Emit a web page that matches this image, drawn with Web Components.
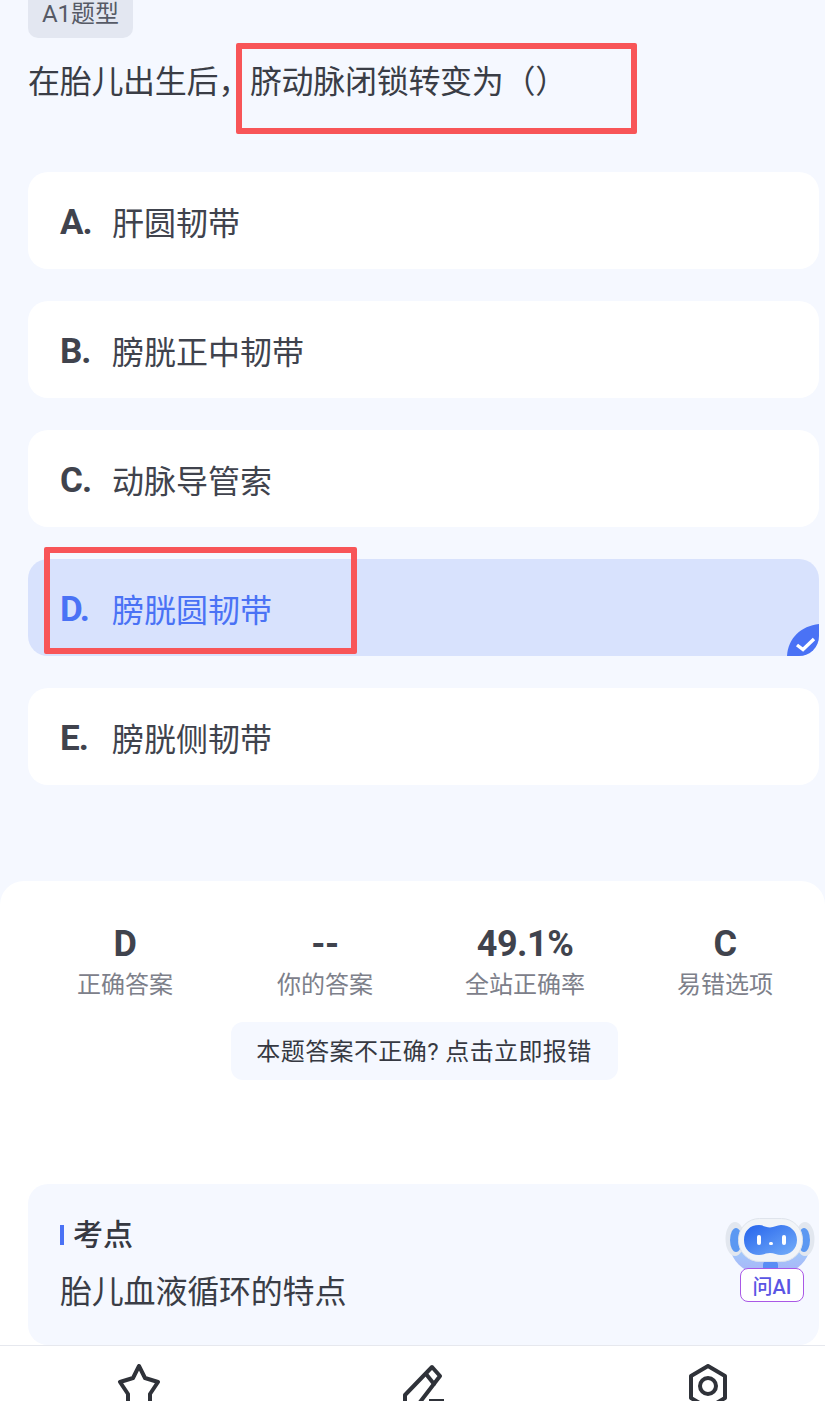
<!DOCTYPE html>
<html lang="zh">
<head>
<meta charset="utf-8">
<title>A1题型</title>
<style>
  html, body { margin: 0; padding: 0; }
  body {
    width: 825px;
    height: 1401px;
    overflow: hidden;
    position: relative;
    background: #f5f8ff;
    color: #363942;
    font-family: Roboto, "Noto Sans CJK SC", "Noto Sans", sans-serif;
  }
  .options { display: flex; flex-direction: column; gap: 32px; margin: 66px 6px 0 28px; }
</style>
</head>
<body>
  <q-tag>A1题型</q-tag>
  <q-stem>在胎儿出生后，脐动脉闭锁转变为（）</q-stem>
  <div class="options">
    <q-option letter="A.">肝圆韧带</q-option>
    <q-option letter="B.">膀胱正中韧带</q-option>
    <q-option letter="C.">动脉导管索</q-option>
    <q-option letter="D." selected>膀胱圆韧带</q-option>
    <q-option letter="E.">膀胱侧韧带</q-option>
  </div>
  <answer-sheet>
    <stat-item value="D">正确答案</stat-item>
    <stat-item value="--">你的答案</stat-item>
    <stat-item value="49.1%">全站正确率</stat-item>
    <stat-item value="C">易错选项</stat-item>
    <report-button slot="report">本题答案不正确? 点击立即报错</report-button>
    <point-card slot="point" title="考点">胎儿血液循环的特点</point-card>
  </answer-sheet>
  <bottom-bar></bottom-bar>
  <robot-badge></robot-badge>
  <red-mark style="left:236px;top:43px;width:401px;height:91px"></red-mark>
  <red-mark style="left:44px;top:547px;width:313px;height:107px"></red-mark>

<script>
class QTag extends HTMLElement {
  constructor () {
    super()
    this.attachShadow({ mode: 'open' }).innerHTML = `
      <style>
        :host {
          display: block;
          box-sizing: border-box;
          width: 105px;
          height: 50px;
          margin: -12px 0 0 28px;
          padding-top: 9px;
          text-align: center;
          font-size: 24px;
          line-height: 34px;
          color: #565a66;
          background: #e3e7f1;
          border-radius: 10px;
        }
      </style>
      <slot></slot>`
  }
}

class QStem extends HTMLElement {
  constructor () {
    super()
    this.attachShadow({ mode: 'open' }).innerHTML = `
      <style>
        :host {
          display: block;
          margin: 20px 0 0 28px;
          font-size: 32px;
          line-height: 48px;
          letter-spacing: -0.3px;
          color: #3a3d46;
          white-space: nowrap;
        }
      </style>
      <slot></slot>`
  }
}

class QOption extends HTMLElement {
  constructor () {
    super()
    const selected = this.hasAttribute('selected')
    this.attachShadow({ mode: 'open' }).innerHTML = `
      <style>
        :host {
          display: flex;
          align-items: center;
          height: 97px;
          padding-left: 32px;
          box-sizing: border-box;
          position: relative;
          overflow: hidden;
          border-radius: 20px;
          font-size: 32px;
          color: ${selected ? '#4a72f5' : '#40434d'};
          background: ${selected ? '#d8e2fd' : '#fff'};
        }
        .letter { width: 52px; margin-top: 4px; font-size: 35px; font-weight: 700; letter-spacing: -1px; flex: none; }
        svg { position: absolute; right: 0; bottom: 0; }
      </style>
      <span class="letter">${this.getAttribute('letter')}</span>
      <slot></slot>
      ${selected ? `<svg width="32" height="32" viewBox="0 0 32 32">
        <path d="M0 32C1 14 14 2 32 0V32Z" fill="#4a72f5"/>
        <path d="M10 21l6 4.5L27 15" fill="none" stroke="#fff" stroke-width="3.4"/>
      </svg>` : ''}`
  }
}

class AnswerSheet extends HTMLElement {
  constructor () {
    super()
    this.attachShadow({ mode: 'open' }).innerHTML = `
      <style>
        :host {
          display: block;
          box-sizing: border-box;
          height: 464px;
          margin-top: 96px;
          padding: 43px 0 0 25px;
          background: #fff;
          border-radius: 24px 24px 0 0;
        }
        .stats { display: grid; grid-template-columns: repeat(4, 200px); }
        .report { display: flex; justify-content: center; margin: 19px 2px 0 0; }
        .point { margin: 104px 6px 0 3px; }
      </style>
      <div class="stats"><slot></slot></div>
      <div class="report"><slot name="report"></slot></div>
      <div class="point"><slot name="point"></slot></div>`
  }
}

class StatItem extends HTMLElement {
  constructor () {
    super()
    this.attachShadow({ mode: 'open' }).innerHTML = `
      <style>
        :host { display: flex; flex-direction: column; align-items: center; gap: 3px; }
        .value { font-size: 36px; line-height: 40px; font-weight: 700; letter-spacing: -0.5px; color: #40434d; }
        .label { font-size: 24px; line-height: 36px; color: #7d808a; white-space: nowrap; }
      </style>
      <span class="value">${this.getAttribute('value')}</span>
      <span class="label"><slot></slot></span>`
  }
}

class ReportButton extends HTMLElement {
  constructor () {
    super()
    this.attachShadow({ mode: 'open' }).innerHTML = `
      <style>
        :host {
          display: flex;
          align-items: center;
          justify-content: center;
          box-sizing: border-box;
          width: 387px;
          height: 58px;
          padding-bottom: 4px;
          font-size: 24px;
          letter-spacing: 0.4px;
          color: #363942;
          background: #f5f8ff;
          border-radius: 12px;
          white-space: nowrap;
        }
      </style>
      <slot></slot>`
  }
}

class PointCard extends HTMLElement {
  constructor () {
    super()
    this.attachShadow({ mode: 'open' }).innerHTML = `
      <style>
        :host {
          display: block;
          box-sizing: border-box;
          height: 161px;
          padding: 29px 0 0 32px;
          background: #f5f8ff;
          border-radius: 20px;
        }
        .title {
          display: flex;
          align-items: center;
          gap: 9px;
          font-size: 30px;
          line-height: 44px;
          font-weight: 500;
          color: #363942;
        }
        .title i { width: 4px; height: 20px; background: #4a72f5; }
        .body { margin-top: 12px; font-size: 32px; line-height: 46px; letter-spacing: -0.2px; color: #3a3d46; }
      </style>
      <div class="title"><i></i>${this.getAttribute('title')}</div>
      <div class="body"><slot></slot></div>`
  }
}

class BottomBar extends HTMLElement {
  constructor () {
    super()
    this.attachShadow({ mode: 'open' }).innerHTML = `
      <style>
        :host {
          display: flex;
          justify-content: space-between;
          box-sizing: border-box;
          position: absolute;
          left: 0;
          right: 0;
          top: 1345px;
          height: 56px;
          overflow: hidden;
          padding: 18px 96px 0 117px;
          background: #fff;
          border-top: 1px solid #e6e8ee;
        }
        svg { fill: none; stroke: #2f3239; stroke-width: 4; stroke-linejoin: round; stroke-linecap: round; flex: none; }
      </style>
      <svg width="44" height="46" viewBox="0 0 44 46">
        <path d="M22 2l6 12 13 4-8 12 0 15-11-6-11 6 0-15-8-12 13-4z"/>
      </svg>
      <svg width="44" height="46" viewBox="0 0 44 46">
        <path d="M30 3l8 9-23 30H3V31z"/>
        <path d="M24 10l8 10"/>
        <path d="M27 37h15" stroke-linecap="butt"/>
      </svg>
      <svg width="42" height="46" viewBox="0 0 42 46">
        <path d="M21 2l17 10v22L21 44 4 34V12z"/>
        <circle cx="21" cy="22" r="8"/>
      </svg>`
  }
}

class RobotBadge extends HTMLElement {
  constructor () {
    super()
    this.attachShadow({ mode: 'open' }).innerHTML = `
      <style>
        :host { position: absolute; left: 725px; top: 1215px; width: 90px; height: 90px; display: block; }
        svg { display: block; }
        .tag {
          position: absolute;
          left: 15px;
          top: 53px;
          box-sizing: border-box;
          width: 64px;
          height: 34px;
          display: flex;
          align-items: center;
          justify-content: center;
          background: #fff;
          border: 1.5px solid #a958e6;
          border-radius: 8px;
          font-size: 20px;
          font-weight: 500;
          color: #5a55e4;
          white-space: nowrap;
        }
      </style>
      <svg width="90" height="70" viewBox="0 0 90 70">
        <defs>
          <linearGradient id="face" x1="0" y1="0" x2="1" y2="1">
            <stop offset="0" stop-color="#2563ec"/>
            <stop offset="1" stop-color="#74aef9"/>
          </linearGradient>
          <linearGradient id="body" x1="0" y1="0" x2="0" y2="1">
            <stop offset="0" stop-color="#9fd3fb"/>
            <stop offset="1" stop-color="#a9b4f8"/>
          </linearGradient>
        </defs>
        <path d="M4 26C5 44 15 54 28 58H62C75 54 85 44 86 26Z" fill="url(#body)"/>
        <rect x="38" y="46" width="15" height="12" rx="4" fill="#5a8df5"/>
        <ellipse cx="10" cy="24" rx="9.5" ry="17" fill="#e2e7ef"/>
        <ellipse cx="80" cy="24" rx="9.5" ry="17" fill="#e2e7ef"/>
        <ellipse cx="11" cy="25" rx="6" ry="12" fill="#5b98f2"/>
        <ellipse cx="79" cy="25" rx="6" ry="12" fill="#5b98f2"/>
        <rect x="13.5" y="3.5" width="64" height="43" rx="21" fill="#f1f4f8" stroke="#dfe4ec"/>
        <path d="M34 10C38 10 41 12.500 45 12.500S52 10 56 10C65 10 72 16 72 25S65 40 56 40C52 40 49 38 45 38S38 40 34 40C25 40 19 34 19 25S25 10 34 10Z" fill="url(#face)"/>
        <rect x="32" y="20" width="4" height="10" rx="2" fill="#fff"/>
        <rect x="57" y="20" width="4" height="10" rx="2" fill="#fff"/>
        <rect x="44" y="27" width="4" height="3" rx="1.5" fill="#fff"/>
      </svg>
      <div class="tag">问AI</div>`
  }
}

class RedMark extends HTMLElement {
  constructor () {
    super()
    this.attachShadow({ mode: 'open' }).innerHTML = `
      <style>
        :host {
          display: block;
          position: absolute;
          box-sizing: border-box;
          border: 6px solid #f85558;
          border-radius: 2px;
        }
      </style>`
  }
}

customElements.define('q-tag', QTag)
customElements.define('q-stem', QStem)
customElements.define('q-option', QOption)
customElements.define('answer-sheet', AnswerSheet)
customElements.define('stat-item', StatItem)
customElements.define('report-button', ReportButton)
customElements.define('point-card', PointCard)
customElements.define('bottom-bar', BottomBar)
customElements.define('robot-badge', RobotBadge)
customElements.define('red-mark', RedMark)
</script>
</body>
</html>
